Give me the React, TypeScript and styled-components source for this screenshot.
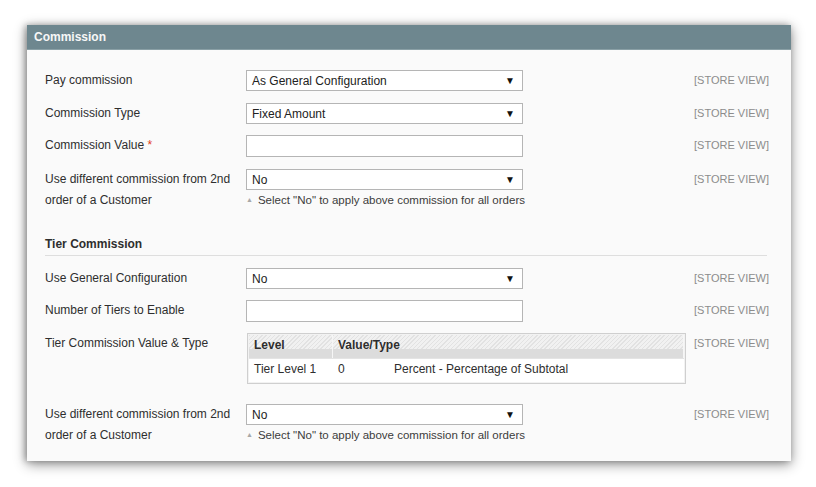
import React from "react";
import styled, { createGlobalStyle } from "styled-components";

const Global = createGlobalStyle`
  html, body { margin: 0; padding: 0; background: #ffffff; }
  body { font-family: "Liberation Sans", Arial, sans-serif; }
`;

const Page = styled.div`
  padding: 25px 0 0 27px;
  width: 816px;
  height: 487px;
  box-sizing: border-box;
`;

const Panel = styled.section`
  width: 764px;
  box-shadow: 0 3px 12px rgba(0, 0, 0, 0.45), -2px 0 6px rgba(0, 0, 0, 0.25);
  background: #fafafa;
`;

const PanelHeader = styled.div`
  height: 25px;
  background: #6e878f;
  color: #f7f7f7;
  font-size: 12px;
  font-weight: bold;
  line-height: 24px;
  padding-left: 7px;
  border-bottom: 1px solid #8aa0a6;
  box-sizing: border-box;
`;

const Body = styled.div`
  padding: 20px 24px 15px 18px;
  display: flex;
  flex-direction: column;
`;

const Row = styled.div<{ $gap?: number }>`
  display: grid;
  grid-template-columns: 201px 448px 1fr;
  align-items: start;
  margin-bottom: ${(p) => p.$gap ?? 12}px;
`;

const Label = styled.div`
  font-size: 12px;
  line-height: 21px;
  color: #2e2e2e;
`;

const Required = styled.span`
  color: #e3411c;
`;

const Control = styled.div`
  display: flex;
  flex-direction: column;
`;

const SelectBox = styled.div`
  width: 277px;
  height: 21px;
  box-sizing: border-box;
  border: 1px solid #b5b5b5;
  background: #ffffff;
  display: flex;
  align-items: center;
  justify-content: space-between;
  padding: 0 7px 0 5px;
  font-size: 12px;
  color: #222;
`;

const Arrow = styled.span`
  font-size: 10px;
  color: #111;
  line-height: 1;
`;

const InputBox = styled.div`
  width: 277px;
  height: 22px;
  box-sizing: border-box;
  border: 1px solid #b5b5b5;
  background: #ffffff;
`;

const Note = styled.div`
  font-size: 11.5px;
  line-height: 20px;
  color: #3c3c3c;
  display: flex;
  align-items: center;
  gap: 5px;
`;

const NoteMark = styled.span`
  font-size: 7px;
  color: #a8a8a8;
`;

const Scope = styled.div`
  font-size: 11px;
  line-height: 21px;
  color: #8c8c8c;
  white-space: nowrap;
`;

const SectionTitle = styled.div`
  font-size: 12px;
  font-weight: bold;
  color: #2e2e2e;
  line-height: 16px;
  padding-bottom: 3px;
  border-bottom: 1px solid #dedede;
  margin: 25px 0 12px;
`;

const TableWrap = styled.div`
  width: 439px;
  margin-left: 1px;
  border: 1px solid #cfcfcf;
  background: #f2f2f2;
  padding: 1px;
  box-sizing: border-box;
`;

const Grid = styled.div`
  display: grid;
  grid-template-columns: 84px 1fr;
`;

const HeadCell = styled.div`
  height: 23px;
  line-height: 21px;
  padding-left: 5px;
  font-size: 12px;
  font-weight: bold;
  color: #2e2e2e;
  background:
    linear-gradient(to bottom, transparent 60%, #dcdcdc 60%),
    repeating-linear-gradient(135deg, #e2e2e2 0 1px, #f1f1f1 1px 3px);
  border-right: 1px solid #f6f6f6;
`;

const Cell = styled.div`
  height: 23px;
  line-height: 21px;
  padding-left: 5px;
  font-size: 12px;
  color: #2e2e2e;
  background: #ffffff;
  border-top: 1px solid #e4e4e4;
  display: flex;
`;

const Val = styled.span`
  width: 56px;
`;

const Select = ({ value }: { value: string }) => (
  <SelectBox>
    <span>{value}</span>
    <Arrow>▼</Arrow>
  </SelectBox>
);

const Hint = () => (
  <Note>
    <NoteMark>▲</NoteMark>
    <span>Select "No" to apply above commission for all orders</span>
  </Note>
);

export default function App() {
  return (
    <>
      <Global />
      <Page>
        <Panel>
          <PanelHeader>Commission</PanelHeader>
          <Body>
            <Row>
              <Label>Pay commission</Label>
              <Control>
                <Select value="As General Configuration" />
              </Control>
              <Scope>[STORE VIEW]</Scope>
            </Row>
            <Row $gap={11}>
              <Label>Commission Type</Label>
              <Control>
                <Select value="Fixed Amount" />
              </Control>
              <Scope>[STORE VIEW]</Scope>
            </Row>
            <Row>
              <Label>
                Commission Value <Required>*</Required>
              </Label>
              <Control>
                <InputBox />
              </Control>
              <Scope>[STORE VIEW]</Scope>
            </Row>
            <Row $gap={0}>
              <Label>
                Use different commission from 2nd
                <br />
                order of a Customer
              </Label>
              <Control>
                <Select value="No" />
                <Hint />
              </Control>
              <Scope>[STORE VIEW]</Scope>
            </Row>

            <SectionTitle>Tier Commission</SectionTitle>

            <Row $gap={11}>
              <Label>Use General Configuration</Label>
              <Control>
                <Select value="No" />
              </Control>
              <Scope>[STORE VIEW]</Scope>
            </Row>
            <Row $gap={11}>
              <Label>Number of Tiers to Enable</Label>
              <Control>
                <InputBox />
              </Control>
              <Scope>[STORE VIEW]</Scope>
            </Row>
            <Row $gap={20}>
              <Label>Tier Commission Value &amp; Type</Label>
              <Control>
                <TableWrap>
                  <Grid>
                    <HeadCell>Level</HeadCell>
                    <HeadCell>Value/Type</HeadCell>
                    <Cell>Tier Level 1</Cell>
                    <Cell>
                      <Val>0</Val>
                      <span>Percent - Percentage of Subtotal</span>
                    </Cell>
                  </Grid>
                </TableWrap>
              </Control>
              <Scope>[STORE VIEW]</Scope>
            </Row>
            <Row $gap={0}>
              <Label>
                Use different commission from 2nd
                <br />
                order of a Customer
              </Label>
              <Control>
                <Select value="No" />
                <Hint />
              </Control>
              <Scope>[STORE VIEW]</Scope>
            </Row>
          </Body>
        </Panel>
      </Page>
    </>
  );
}
